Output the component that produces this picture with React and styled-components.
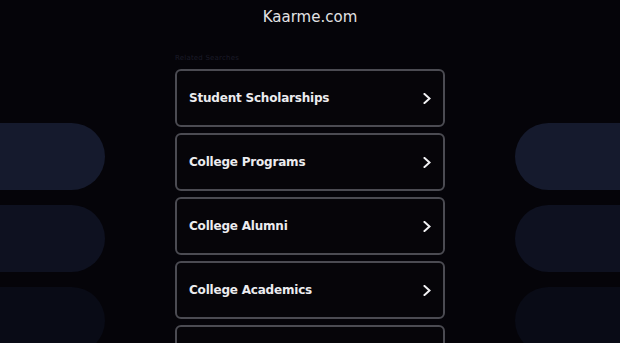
import styled, { createGlobalStyle } from "styled-components";

const links = [
  "Student Scholarships",
  "College Programs",
  "College Alumni",
  "College Academics",
  "College Courses",
];

const pillColors = ["#151a2d", "#0e1120", "#090b16"];

export default function App() {
  return (
    <>
      <GlobalStyle />
      <Page>
        <Header>Kaarme.com</Header>
        <Body>
          <Side $align="start">
            {pillColors.map((c) => (
              <Pill key={c} $color={c} $side="left" />
            ))}
          </Side>
          <Center>
            <Label>Related Searches</Label>
            <List>
              {links.map((text) => (
                <LinkCard key={text} href="#">
                  <span>{text}</span>
                  <Chevron viewBox="0 0 8 11">
                    <path d="M1.5 1 L6.5 5.5 L1.5 10" />
                  </Chevron>
                </LinkCard>
              ))}
            </List>
          </Center>
          <Side $align="end">
            {pillColors.map((c) => (
              <Pill key={c} $color={c} $side="right" />
            ))}
          </Side>
        </Body>
      </Page>
    </>
  );
}

const GlobalStyle = createGlobalStyle`
  html, body {
    margin: 0;
    background: #050409;
    font-family: "DejaVu Sans", Verdana, sans-serif;
  }
`;

const Page = styled.div`
  height: 343px;
  overflow: hidden;
  display: flex;
  flex-direction: column;
  & > * {
    flex-shrink: 0;
  }
`;

const Header = styled.h1`
  margin: 0;
  padding-top: 8px;
  height: 20px;
  line-height: 18px;
  text-align: center;
  font-size: 15px;
  font-weight: normal;
  color: #e2e2e4;
`;

const Body = styled.div`
  display: grid;
  grid-template-columns: 1fr 270px 1fr;
`;

const Side = styled.div`
  display: flex;
  flex-direction: column;
  align-items: ${(p) => (p.$align === "start" ? "flex-start" : "flex-end")};
  gap: 15px;
  padding-top: 95px;
`;

const Pill = styled.div`
  width: 105px;
  height: 67px;
  flex-shrink: 0;
  background: ${(p) => p.$color};
  border-radius: ${(p) =>
    p.$side === "left" ? "0 34px 34px 0" : "34px 0 0 34px"};
`;

const Center = styled.div`
  display: flex;
  flex-direction: column;
`;

const Label = styled.div`
  flex-shrink: 0;
  box-sizing: border-box;
  padding-top: 26px;
  height: 41px;
  line-height: 8px;
  font-size: 7px;
  color: #1b1b28;
  letter-spacing: 0.2px;
`;

const List = styled.div`
  display: flex;
  flex-direction: column;
  gap: 6px;
`;

const LinkCard = styled.a`
  box-sizing: border-box;
  height: 58px;
  flex-shrink: 0;
  display: flex;
  align-items: center;
  justify-content: space-between;
  padding: 0 12px 0 12px;
  border: 2px solid #4b4b52;
  border-radius: 6px;
  background: #060509;
  color: #ececef;
  font-size: 12px;
  font-weight: bold;
  letter-spacing: -0.2px;
  text-decoration: none;
`;

const Chevron = styled.svg`
  width: 8px;
  height: 11px;
  fill: none;
  stroke: #f2f2f4;
  stroke-width: 2;
  stroke-linecap: square;
`;
